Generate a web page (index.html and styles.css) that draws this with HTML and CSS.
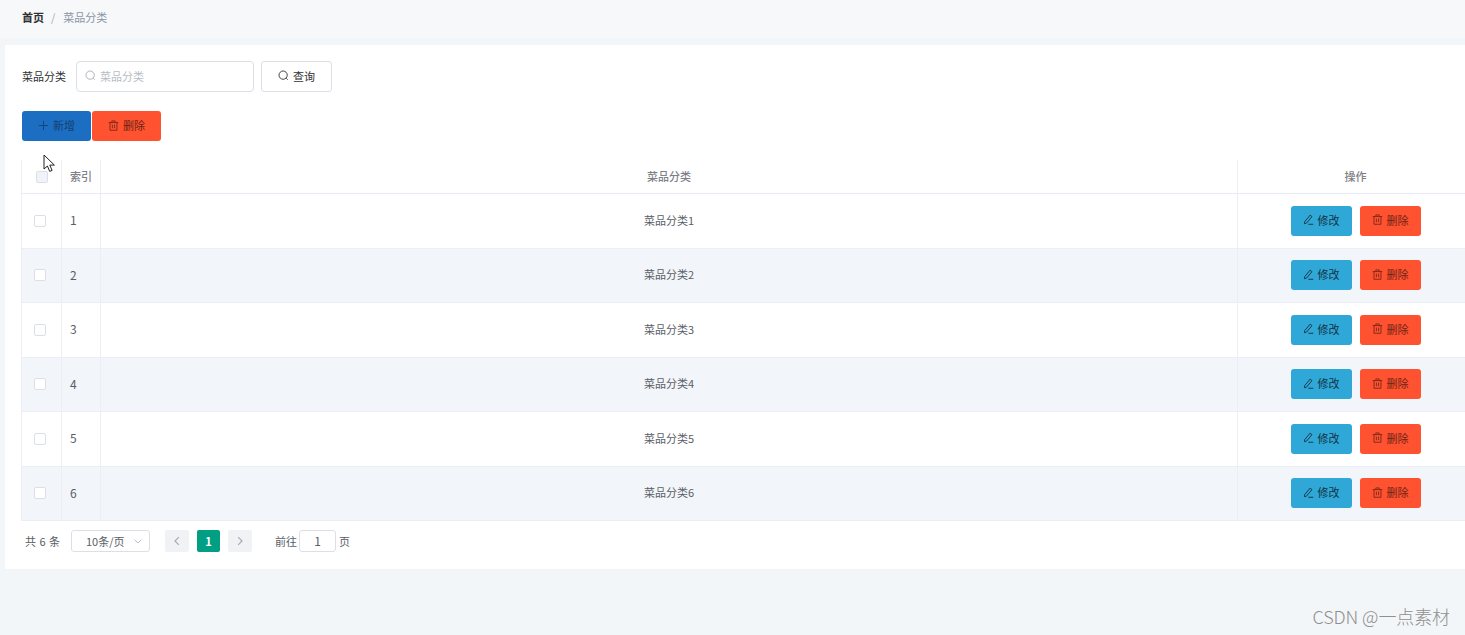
FILE: index.html
```html
<!DOCTYPE html>
<html lang="zh-CN">
<head>
  <meta charset="UTF-8">
  <title>菜品分类</title>
  <link rel="stylesheet" href="styles.css">
</head>
<body>
  <svg width="0" height="0" class="defs">
    <symbol id="i-search" viewBox="0 0 12 12"><circle cx="5.6" cy="5.6" r="4.5" fill="none" stroke="currentColor"/><path d="M9 9l1.6 1.6" fill="none" stroke="currentColor"/></symbol>
    <symbol id="i-trash" viewBox="0 0 12 12"><path d="M.8 2.8h10.4M4.2 2.8V1h3.6v1.8M2.2 2.8v8.4h7.6V2.8M4.8 5v4M7.2 5v4" fill="none" stroke="currentColor" stroke-width=".9"/></symbol>
    <symbol id="i-edit" viewBox="0 0 12 12"><path d="M1.8 8.4L7.8 1.2l2 1.7-6 7.1-2.2.6zM5.8 11.2h5.4" fill="none" stroke="currentColor"/></symbol>
    <symbol id="i-plus" viewBox="0 0 12 12"><path d="M6 1v10M1 6h10" fill="none" stroke="currentColor"/></symbol>
  </svg>

  <div class="breadcrumb">
    <span class="crumb-home">首页</span>
    <span class="crumb-sep">/</span>
    <span class="crumb-now">菜品分类</span>
  </div>

  <div class="card">
    <div class="search-row">
      <label class="search-label">菜品分类</label>
      <div class="search-input">
        <svg class="icon"><use href="#i-search"/></svg>
        <span>菜品分类</span>
      </div>
      <button class="btn btn-plain"><svg class="icon"><use href="#i-search"/></svg>查询</button>
    </div>

    <div class="tool-row">
      <button class="btn btn-add"><svg class="icon"><use href="#i-plus"/></svg>新增</button>
      <button class="btn btn-del"><svg class="icon"><use href="#i-trash"/></svg>删除</button>
    </div>

    <table class="table">
      <colgroup>
        <col class="col-check"><col class="col-index"><col><col class="col-ops">
      </colgroup>
      <thead>
        <tr>
          <th><span class="check check-head"></span></th>
          <th class="left">索引</th>
          <th>菜品分类</th>
          <th>操作</th>
        </tr>
      </thead>
      <tbody>
        <tr>
          <td><span class="check"></span></td><td class="left num">1</td><td class="name">菜品分类1</td>
          <td><div class="ops"><button class="btn btn-edit"><svg class="icon"><use href="#i-edit"/></svg>修改</button><button class="btn btn-del"><svg class="icon"><use href="#i-trash"/></svg>删除</button></div></td>
        </tr>
        <tr class="alt">
          <td><span class="check"></span></td><td class="left num">2</td><td class="name">菜品分类2</td>
          <td><div class="ops"><button class="btn btn-edit"><svg class="icon"><use href="#i-edit"/></svg>修改</button><button class="btn btn-del"><svg class="icon"><use href="#i-trash"/></svg>删除</button></div></td>
        </tr>
        <tr>
          <td><span class="check"></span></td><td class="left num">3</td><td class="name">菜品分类3</td>
          <td><div class="ops"><button class="btn btn-edit"><svg class="icon"><use href="#i-edit"/></svg>修改</button><button class="btn btn-del"><svg class="icon"><use href="#i-trash"/></svg>删除</button></div></td>
        </tr>
        <tr class="alt">
          <td><span class="check"></span></td><td class="left num">4</td><td class="name">菜品分类4</td>
          <td><div class="ops"><button class="btn btn-edit"><svg class="icon"><use href="#i-edit"/></svg>修改</button><button class="btn btn-del"><svg class="icon"><use href="#i-trash"/></svg>删除</button></div></td>
        </tr>
        <tr>
          <td><span class="check"></span></td><td class="left num">5</td><td class="name">菜品分类5</td>
          <td><div class="ops"><button class="btn btn-edit"><svg class="icon"><use href="#i-edit"/></svg>修改</button><button class="btn btn-del"><svg class="icon"><use href="#i-trash"/></svg>删除</button></div></td>
        </tr>
        <tr class="alt">
          <td><span class="check"></span></td><td class="left num">6</td><td class="name">菜品分类6</td>
          <td><div class="ops"><button class="btn btn-edit"><svg class="icon"><use href="#i-edit"/></svg>修改</button><button class="btn btn-del"><svg class="icon"><use href="#i-trash"/></svg>删除</button></div></td>
        </tr>
      </tbody>
    </table>

    <div class="pager">
      <span class="total">共 6 条</span>
      <div class="size-select"><span>10条/页</span><svg class="chev" viewBox="0 0 10 10"><path d="M1.5 3.5L5 7l3.5-3.5" fill="none" stroke="currentColor"/></svg></div>
      <div class="pages">
        <span class="page-btn"><svg class="arrow" viewBox="0 0 10 10"><path d="M6.8 1.2L3 5l3.8 3.8" fill="none" stroke="currentColor" stroke-width="1.2"/></svg></span>
        <span class="page-btn page-on">1</span>
        <span class="page-btn"><svg class="arrow" viewBox="0 0 10 10"><path d="M3.2 1.2L7 5 3.2 8.8" fill="none" stroke="currentColor" stroke-width="1.2"/></svg></span>
      </div>
      <span class="goto">前往</span>
      <span class="goto-input">1</span>
      <span class="goto-end">页</span>
    </div>
  </div>

  <svg class="cursor" width="13" height="19" viewBox="0 0 13 19"><path d="M1 1v14l3.4-3 2.3 5.4 2.4-1-2.3-5.3h4.6z" fill="#fff" stroke="#222" stroke-width="1"/></svg>
  <div class="watermark">CSDN @一点素材</div>
</body>
</html>
```

FILE: styles.css
```css
*{margin:0;padding:0;box-sizing:border-box;}
html,body{height:100%;overflow:hidden;}
body{position:relative;background:#f3f6f9;font-family:"Noto Sans CJK SC","Liberation Sans",sans-serif;font-size:11px;color:#5a5e66;}
.defs{position:absolute;}
.icon{width:11px;height:11px;flex:none;}

.breadcrumb{display:flex;align-items:center;height:38px;padding:0 0 5px 22px;background:#f7f8f9;}
.crumb-home{font-weight:700;color:#303133;}
.crumb-sep{margin:0 8px 0 7px;color:#a8abb2;}
.crumb-now{color:#8a94a6;}

.card{width:1480px;height:524px;margin:7px 0 0 5px;padding:16px 0 0 16px;background:#fff;}
.search-row{display:flex;align-items:center;height:31px;}
.search-label{width:55px;margin-left:1px;padding-bottom:1px;color:#303133;}
.search-input{display:flex;align-items:center;gap:4px;width:178px;height:31px;margin-left:-1px;padding:0 0 2px 8px;border:1px solid #dcdfe6;border-radius:4px;color:#b8bcc4;}
.search-input .icon{color:#a8abb2;}

.btn{display:inline-flex;justify-content:center;align-items:center;gap:4px;height:30px;padding-bottom:2px;border:1px solid transparent;border-radius:3px;font:inherit;color:#303133;}
.btn-plain{width:71px;height:31px;margin-left:7px;border-color:#dcdfe6;background:#fff;}
.tool-row{display:flex;gap:1px;margin:19px 0 0 1px;}
.tool-row .btn{width:69px;}
.btn-add{background:#1b6ec2;color:#17406e;}
.btn-del{background:#ff5230;color:#6e2415;}
.btn-edit{background:#2fa8d8;color:#14313f;}
.ops{display:flex;justify-content:center;gap:8px;}
.ops .btn{width:61px;}

.table{width:1453px;margin-top:19px;border-collapse:collapse;table-layout:fixed;border-left:1px solid #ebeef5;}
.col-check{width:40px;}
.col-index{width:39px;}
.col-ops{width:236px;}
.table th{height:33.5px;padding-bottom:2px;font-weight:500;color:#7d8087;border-bottom:1px solid #e6ebf5;border-right:1px solid #ebeef5;}
.table td{height:54.5px;text-align:center;border-bottom:1px solid #ebeef5;border-right:1px solid #ebeef5;}
.table .left{padding-left:8px;text-align:left;}
.table .name,.table .num{padding-bottom:2px;}
.table .num{font-size:12px;}
.alt td{background:#f2f5f9;}
.check{display:block;width:12px;height:12px;margin:0 0 0 12px;border:1px solid #dcdfe6;border-radius:2px;background:#fff;}
.check-head{margin:2px 0 0 14px;background:#f0f3fa;}

.pager{display:flex;align-items:center;height:41px;padding:0 0 2px 4px;}
.total{width:46px;word-spacing:1px;}
.size-select{display:flex;align-items:center;justify-content:space-between;width:79px;height:22px;padding:0 6px 0 14px;border:1px solid #dcdfe6;border-radius:3px;}
.chev{width:10px;height:10px;color:#b8bcc4;}
.pages{display:flex;gap:8px;margin-left:15px;}
.page-btn{display:flex;align-items:center;justify-content:center;width:24px;height:22px;border-radius:2px;background:#f0f2f5;color:#a8abb2;}
.page-on{width:23px;background:#009f84;color:#fff;font-weight:700;}
.arrow{width:10px;height:10px;}
.goto{margin-left:23px;}
.goto-input{width:37px;height:22px;margin:0 3px 0 2px;border:1px solid #dcdfe6;border-radius:3px;text-align:center;font-size:12px;line-height:19px;}

.cursor{position:absolute;left:43px;top:154px;}
.watermark{position:absolute;right:15px;top:604px;font-size:18px;letter-spacing:-.1px;line-height:24px;font-weight:300;color:#8f8f8f;}
```
